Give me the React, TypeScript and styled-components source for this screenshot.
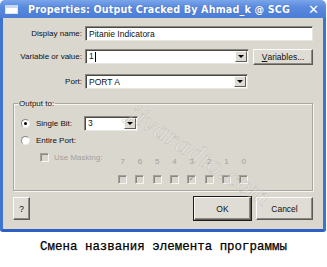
import { FC } from "react";
import styled, { createGlobalStyle } from "styled-components";

const GlobalStyle = createGlobalStyle`
  html, body {
    margin: 0;
    padding: 0;
    background: #ffffff;
  }
`;

const Page = styled.div`
  width: 327px;
  height: 267px;
  display: flex;
  flex-direction: column;
  align-items: flex-start;
  font-family: "Liberation Sans", Arial, sans-serif;
  position: relative;
  overflow: hidden;
`;

const Window = styled.div`
  width: 320px;
  height: 211px;
  border: 3px solid #3f73d2;
  border-top: none;
  border-bottom: 3px solid #2d5fc4;
  border-radius: 0 0 3px 3px;
  background: #dad7cf;
  display: flex;
  flex-direction: column;
`;

const TitleBar = styled.div`
  height: 18px;
  width: 326px;
  background: linear-gradient(#7aa5ea, #5a8ade 40%, #4b7dd6);
  border-radius: 5px 5px 0 0;
  display: flex;
  align-items: center;
  padding: 0 5px;
  box-sizing: border-box;
  color: #ffffff;
`;

const TitleIcon = styled.div`
  width: 13px;
  height: 9px;
  background: #ffffff;
  border: 1px solid #dbe6f7;
  border-top: 3px solid #c7d8f3;
  box-sizing: border-box;
  margin-right: 10px;
`;

const TitleText = styled.div`
  flex: 1;
  font-family: "DejaVu Sans", Verdana, sans-serif;
  font-weight: bold;
  font-size: 9.6px;
  letter-spacing: 0.15px;
  white-space: nowrap;
  text-shadow: 0 0 1px rgba(30, 60, 140, 0.6);
`;

const CloseGlyph = styled.div`
  font-family: "DejaVu Sans", sans-serif;
  font-weight: bold;
  font-size: 13px;
  line-height: 1;
  margin-right: 2px;
`;

const Body = styled.div`
  flex: 1;
  padding: 8px 10px 0 10px;
  display: flex;
  flex-direction: column;
  font-size: 8px;
  color: #111;
`;

const Row = styled.div<{ $gap?: number }>`
  display: flex;
  align-items: center;
  height: 15px;
  margin-bottom: ${(p) => p.$gap ?? 8}px;
`;

const Label = styled.div`
  width: 69px;
  margin-right: 3px;
  text-align: right;
  white-space: nowrap;
`;

const Field = styled.div<{ $width?: number }>`
  ${(p) => (p.$width ? `width: ${p.$width}px;` : "flex: 1;")}
  height: 15px;
  box-sizing: border-box;
  background: #ffffff;
  border: 1px solid #8a8780;
  border-right-color: #e8e6e0;
  border-bottom-color: #e8e6e0;
  box-shadow: inset 1px 1px 0 #4a4843;
  display: flex;
  align-items: center;
  padding-left: 3px;
  font-size: 8.5px;
  color: #111;
`;

const FieldText = styled.div`
  flex: 1;
  white-space: nowrap;
`;

const Caret = styled.span`
  display: inline-block;
  width: 1px;
  height: 10px;
  background: #000;
  margin-left: 1px;
  vertical-align: middle;
`;

const DropButton = styled.div`
  width: 12px;
  height: 11px;
  margin-right: 1px;
  box-sizing: border-box;
  background: #dedbd4;
  border: 1px solid #fafafa;
  border-right-color: #5e5c58;
  border-bottom-color: #5e5c58;
  display: flex;
  align-items: center;
  justify-content: center;

  &::after {
    content: "";
    border-left: 3px solid transparent;
    border-right: 3px solid transparent;
    border-top: 3px solid #000;
  }
`;

const Button = styled.button<{ $width: number; $default?: boolean }>`
  width: ${(p) => p.$width}px;
  height: 23px;
  box-sizing: border-box;
  font-family: "Liberation Sans", Arial, sans-serif;
  font-size: 8.5px;
  color: #111;
  background: #dedcd5;
  border: 1px solid #fbfbfb;
  border-right-color: #5c5a55;
  border-bottom-color: #5c5a55;
  box-shadow: ${(p) =>
    p.$default ? "0 0 0 1px #1c1c1c, inset -1px -1px 0 #8d8a84" : "inset -1px -1px 0 #8d8a84"};
  padding: 0;
  display: flex;
  align-items: center;
  justify-content: center;
`;

const SmallButton = styled(Button)`
  height: 16px;
`;

const Group = styled.fieldset`
  margin: 10px 0 0 0;
  padding: 8px 0 0 0;
  height: 92px;
  box-sizing: border-box;
  border: 1px solid #a9a69f;
  box-shadow: 1px 1px 0 #f6f5f1, inset 1px 1px 0 #f6f5f1;
  display: flex;
  flex-direction: column;
`;

const Legend = styled.legend`
  padding: 0 1px;
  margin-left: 4px;
  font-size: 8px;
  line-height: 9px;
`;

const OptionRow = styled.div<{ $height: number }>`
  display: flex;
  align-items: center;
  height: ${(p) => p.$height}px;
  padding-left: 7px;
`;

const Radio = styled.div<{ $on?: boolean }>`
  width: 9px;
  height: 9px;
  border-radius: 50%;
  box-sizing: border-box;
  background: #ffffff;
  border: 1px solid #8c8982;
  border-right-color: #eeece6;
  border-bottom-color: #eeece6;
  margin-right: 6px;
  display: flex;
  align-items: center;
  justify-content: center;

  &::after {
    content: "";
    width: 3px;
    height: 3px;
    border-radius: 50%;
    background: ${(p) => (p.$on ? "#000" : "transparent")};
  }
`;

const OptionLabel = styled.div<{ $width?: number; $muted?: boolean }>`
  ${(p) => (p.$width ? `width: ${p.$width}px;` : "")}
  white-space: nowrap;
  color: ${(p) => (p.$muted ? "#a4a19a" : "#111")};
`;

const Check = styled.div<{ $on?: boolean }>`
  width: 9px;
  height: 9px;
  box-sizing: border-box;
  border: 1px solid #a5a29b;
  border-right-color: #f4f3ef;
  border-bottom-color: #f4f3ef;
  box-shadow: inset 1px 1px 0 #8b8881;
  background: #d9d6ce;
  display: flex;
  align-items: center;
  justify-content: center;
  color: #8b8881;
  font-size: 8px;
  line-height: 1;
  font-family: "DejaVu Sans", sans-serif;

  &::after {
    content: "${(p) => (p.$on ? "✓" : "")}";
  }
`;

const MaskArea = styled.div`
  display: flex;
  align-items: flex-start;
  padding-left: 26px;
`;

const MaskLabel = styled.div`
  display: flex;
  align-items: center;
  gap: 5px;
  width: 74px;
  margin-top: 3px;
`;

const BitGrid = styled.div`
  display: grid;
  grid-template-columns: repeat(8, 17.3px);
  grid-template-rows: 22px 14px;
  align-items: center;
  justify-items: center;
`;

const BitNumber = styled.div`
  color: #a4a19a;
  font-size: 8px;
`;

const Footer = styled.div`
  display: flex;
  align-items: center;
  margin-top: 6px;
  gap: 5px;
`;

const Spacer = styled.div`
  flex: 1;
`;

const Caption = styled.div`
  width: 327px;
  margin-top: 8px;
  text-align: center;
  font-family: "Liberation Mono", "Courier New", monospace;
  font-size: 12.4px;
  color: #000;
  letter-spacing: 0.05px;
  -webkit-text-stroke: 0.25px #000;
`;

const Watermark = styled.div`
  position: absolute;
  left: 118px;
  top: 140px;
  transform: rotate(33deg);
  font-family: "Liberation Serif", serif;
  font-style: italic;
  font-size: 27px;
  letter-spacing: 1px;
  color: rgba(255, 255, 255, 0.28);
  -webkit-text-stroke: 0.6px rgba(150, 146, 138, 0.35);
  pointer-events: none;
  white-space: nowrap;
`;

const bits = [7, 6, 5, 4, 3, 2, 1, 0];

const App: FC = () => {
  return (
    <>
      <GlobalStyle />
      <Page>
        <TitleBar>
          <TitleIcon />
          <TitleText>Properties: Output Cracked By Ahmad_k @ SCG</TitleText>
          <CloseGlyph>✕</CloseGlyph>
        </TitleBar>
        <Window>
          <Body>
            <Row>
              <Label>Display name:</Label>
              <Field>
                <FieldText>Pitanie Indicatora</FieldText>
              </Field>
            </Row>
            <Row $gap={10}>
              <Label>Variable or value:</Label>
              <Field $width={164}>
                <FieldText>
                  1<Caret />
                </FieldText>
                <DropButton />
              </Field>
              <Spacer />
              <SmallButton $width={60} type="button">
                <u>V</u>ariables...
              </SmallButton>
            </Row>
            <Row $gap={0}>
              <Label>Port:</Label>
              <Field $width={163}>
                <FieldText>PORT A</FieldText>
                <DropButton />
              </Field>
            </Row>
            <Group>
              <Legend>Output to:</Legend>
              <OptionRow $height={14}>
                <Radio $on />
                <OptionLabel $width={48}>Single Bit:</OptionLabel>
                <Field $width={54}>
                  <FieldText>3</FieldText>
                  <DropButton />
                </Field>
              </OptionRow>
              <OptionRow $height={20}>
                <Radio />
                <OptionLabel>Entire Port:</OptionLabel>
              </OptionRow>
              <MaskArea>
                <MaskLabel>
                  <Check />
                  <OptionLabel $muted>Use Masking:</OptionLabel>
                </MaskLabel>
                <BitGrid>
                  {bits.map((b) => (
                    <BitNumber key={`n${b}`}>{b}</BitNumber>
                  ))}
                  {bits.map((b) => (
                    <Check key={`c${b}`} $on={b === 3} />
                  ))}
                </BitGrid>
              </MaskArea>
            </Group>
            <Footer>
              <Button $width={17} type="button">
                ?
              </Button>
              <Spacer />
              <Button $width={57} $default type="button">
                OK
              </Button>
              <Button $width={57} type="button">
                Cancel
              </Button>
            </Footer>
          </Body>
        </Window>
        <Caption>Смена названия элемента программы</Caption>
        <Watermark>jivaradio.com</Watermark>
      </Page>
    </>
  );
};

export default App;
